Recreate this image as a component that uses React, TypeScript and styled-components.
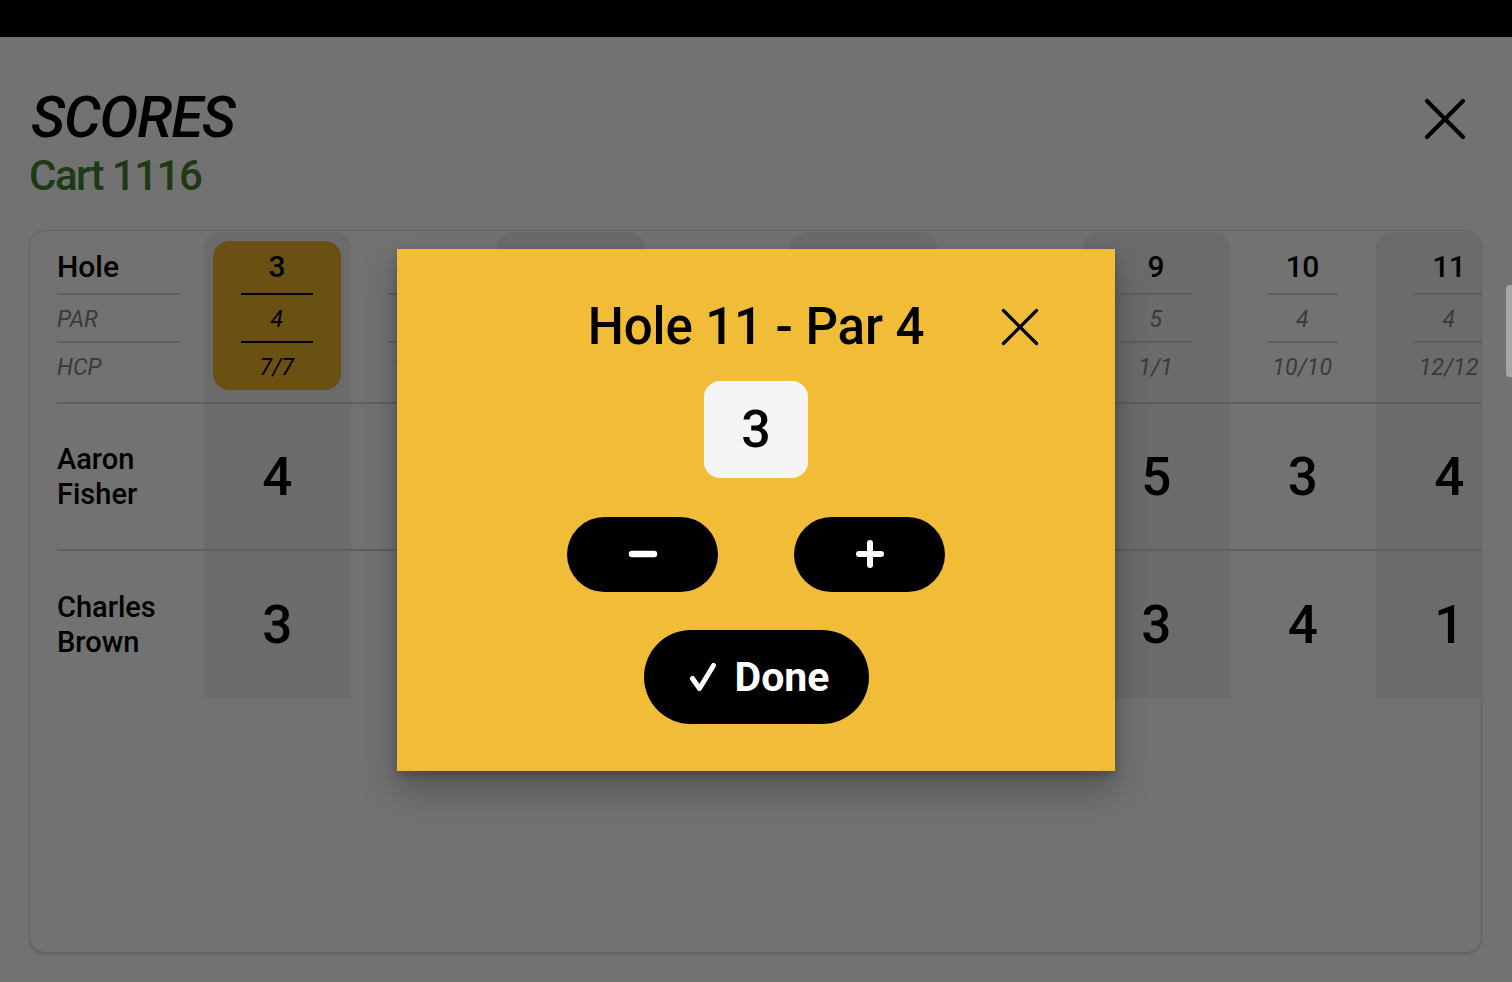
import styled, { createGlobalStyle } from "styled-components";
import { useState } from "react";

const GlobalStyle = createGlobalStyle`
  html, body {
    margin: 0;
    padding: 0;
  }
  body {
    font-family: Roboto, "Liberation Sans", sans-serif;
    background: #fff;
    color: #000;
    overflow: hidden;
  }
  * {
    box-sizing: border-box;
  }
`;

type HoleType = {
  hole: number;
  par: number;
  hcp: string;
};

type PlayerType = {
  first: string;
  last: string;
  scores: number[];
};

const holes: HoleType[] = [
  { hole: 3, par: 4, hcp: "7/7" },
  { hole: 4, par: 3, hcp: "15/15" },
  { hole: 5, par: 4, hcp: "3/3" },
  { hole: 6, par: 5, hcp: "11/11" },
  { hole: 7, par: 4, hcp: "5/5" },
  { hole: 8, par: 3, hcp: "17/17" },
  { hole: 9, par: 5, hcp: "1/1" },
  { hole: 10, par: 4, hcp: "10/10" },
  { hole: 11, par: 4, hcp: "12/12" },
];

const players: PlayerType[] = [
  { first: "Aaron", last: "Fisher", scores: [4, 3, 5, 6, 4, 3, 5, 3, 4] },
  { first: "Charles", last: "Brown", scores: [3, 4, 4, 5, 5, 2, 3, 4, 1] },
];

const CloseIcon = ({ size, stroke }: { size: number; stroke: number }) => (
  <svg width={size} height={size} viewBox="0 0 48 48" fill="none">
    <path
      d="M6 6 L42 42 M42 6 L6 42"
      stroke="#000"
      strokeWidth={stroke}
      strokeLinecap="round"
    />
  </svg>
);

const App: React.FC = () => {
  const [score, setScore] = useState<number>(3);
  const activeHole = holes[0].hole;

  return (
    <>
      <GlobalStyle />
      <Screen>
        <StatusBar />
        <Page>
          <Header>
            <div>
              <Title>SCORES</Title>
              <Subtitle>Cart 1116</Subtitle>
            </div>
            <HeaderClose aria-label="Close">
              <CloseIcon size={48} stroke={4.2} />
            </HeaderClose>
          </Header>

          <Card>
            <LabelColumn>
              <HeadCell>
                <HeadBox>
                  <HoleLabel>Hole</HoleLabel>
                  <SubLabel>PAR</SubLabel>
                  <SubLabel $last>HCP</SubLabel>
                </HeadBox>
              </HeadCell>
              {players.map((p, i) => (
                <ScoreCell key={p.first} $last={i === players.length - 1}>
                  <PlayerName>
                    {p.first}
                    <br />
                    {p.last}
                  </PlayerName>
                </ScoreCell>
              ))}
            </LabelColumn>

            {holes.map((h, idx) => {
              const active = h.hole === activeHole;
              return (
                <HoleColumn key={h.hole} $shaded={idx % 2 === 0}>
                  <HeadCell>
                    <HoleBox $active={active}>
                      <HoleNumber $active={active}>{h.hole}</HoleNumber>
                      <HoleInfo $active={active}>{h.par}</HoleInfo>
                      <HoleInfo $active={active} $last>
                        {h.hcp}
                      </HoleInfo>
                    </HoleBox>
                  </HeadCell>
                  {players.map((p, i) => (
                    <ScoreCell key={p.first} $last={i === players.length - 1}>
                      <ScoreValue>{p.scores[idx]}</ScoreValue>
                    </ScoreCell>
                  ))}
                </HoleColumn>
              );
            })}
          </Card>
        </Page>

        <Overlay>
          <Modal>
            <ModalTitle>Hole 11 - Par 4</ModalTitle>
            <ModalClose aria-label="Close">
              <CloseIcon size={44} stroke={3.6} />
            </ModalClose>

            <ScoreBox>{score}</ScoreBox>

            <StepperRow>
              <StepButton onClick={() => setScore((s) => Math.max(0, s - 1))}>
                <svg width="30" height="30" viewBox="0 0 30 30">
                  <path
                    d="M4 15 H26"
                    stroke="#fff"
                    strokeWidth="6.5"
                    strokeLinecap="round"
                  />
                </svg>
              </StepButton>
              <StepButton onClick={() => setScore((s) => s + 1)}>
                <svg width="30" height="30" viewBox="0 0 30 30">
                  <path
                    d="M4 15 H26 M15 4 V26"
                    stroke="#fff"
                    strokeWidth="6"
                    strokeLinecap="round"
                  />
                </svg>
              </StepButton>
            </StepperRow>

            <DoneButton>
              <svg width="28" height="30" viewBox="0 0 28 30">
                <path
                  d="M3.5 16.5 L10.5 26.5 L24.5 3.5"
                  stroke="#fff"
                  strokeWidth="5"
                  strokeLinecap="round"
                  strokeLinejoin="round"
                  fill="none"
                />
              </svg>
              Done
            </DoneButton>
          </Modal>
        </Overlay>
        <ScrollThumb />
      </Screen>
    </>
  );
};

const Screen = styled.div`
  width: 1512px;
  height: 982px;
  overflow: hidden;
  position: relative;
  background: #fff;
`;

const StatusBar = styled.div`
  height: 37px;
  background: #000;
`;

const Page = styled.div`
  padding: 51px 30px 0 29px;
`;

const Header = styled.div`
  display: flex;
  justify-content: space-between;
  align-items: flex-start;
`;

const Title = styled.h1`
  margin: 0 0 0 2px;
  font-size: 58px;
  line-height: 58px;
  font-style: italic;
  font-weight: 500;
  letter-spacing: -1.2px;
`;

const Subtitle = styled.div`
  margin-top: 9px;
  font-size: 42px;
  line-height: 42px;
  font-weight: 500;
  letter-spacing: -1.5px;
  color: #438431;
`;

const HeaderClose = styled.button`
  margin: 7px 13px 0 0;
  width: 48px;
  height: 48px;
  padding: 0;
  border: none;
  background: none;
  display: flex;
`;

const Card = styled.div`
  margin-top: 33px;
  height: 723px;
  display: flex;
  padding: 1px 0 0 27px;
  border: 1px solid #e2e2e2;
  border-radius: 16px;
  overflow: hidden;
  background: #fff;
  box-shadow: 0 2px 2px rgba(0, 0, 0, 0.14);
`;

const LabelColumn = styled.div`
  flex: 0 0 147px;
  display: flex;
  flex-direction: column;
`;

const HoleColumn = styled.div<{ $shaded: boolean }>`
  flex: 0 0 146.5px;
  display: flex;
  flex-direction: column;
  align-self: flex-start;
  border-radius: 16px 16px 0 0;
  background: ${({ $shaded }) => ($shaded ? "#efefef" : "transparent")};
`;

const HeadCell = styled.div`
  height: 172px;
  padding-top: 9px;
  border-bottom: 2px solid #d4d4d4;
`;

const HeadBox = styled.div`
  width: 122px;
  display: flex;
  flex-direction: column;
`;

const HoleLabel = styled.div`
  height: 54px;
  padding-top: 9px;
  font-size: 30px;
  line-height: 34px;
  font-weight: 500;
  border-bottom: 2px solid #d4d4d4;
`;

const SubLabel = styled.div<{ $last?: boolean }>`
  height: ${({ $last }) => ($last ? 47 : 48)}px;
  display: flex;
  align-items: center;
  padding-top: 2px;
  font-size: 23px;
  font-style: italic;
  color: #848484;
  border-bottom: ${({ $last }) => ($last ? "none" : "2px solid #d4d4d4")};
`;

const HoleBox = styled.div<{ $active: boolean }>`
  margin: 0 10px 0 9px;
  height: 149px;
  padding: 0 28px;
  border-radius: 16px;
  display: flex;
  flex-direction: column;
  background: ${({ $active }) => ($active ? "#efb32d" : "transparent")};
`;

const HoleNumber = styled.div<{ $active: boolean }>`
  height: 54px;
  padding-top: 9px;
  text-align: center;
  font-size: 30px;
  line-height: 34px;
  font-weight: 500;
  letter-spacing: -0.5px;
  border-bottom: 2px solid ${({ $active }) => ($active ? "#000" : "#d2d2d2")};
`;

const HoleInfo = styled.div<{ $active: boolean; $last?: boolean }>`
  height: ${({ $last }) => ($last ? 47 : 48)}px;
  display: flex;
  align-items: center;
  justify-content: center;
  padding-top: 2px;
  font-size: 23px;
  font-style: italic;
  white-space: nowrap;
  color: ${({ $active }) => ($active ? "#000" : "#848484")};
  border-bottom: ${({ $active, $last }) =>
    $last ? "none" : `2px solid ${$active ? "#000" : "#d2d2d2"}`};
`;

const ScoreCell = styled.div<{ $last: boolean }>`
  height: 147px;
  display: flex;
  align-items: center;
  justify-content: center;
  border-bottom: ${({ $last }) => ($last ? "none" : "2px solid #d4d4d4")};

  ${LabelColumn} & {
    justify-content: flex-start;
  }
`;

const PlayerName = styled.div`
  font-size: 29px;
  line-height: 35px;
  font-weight: 500;
`;

const ScoreValue = styled.div`
  font-size: 53px;
  line-height: 60px;
  font-weight: 500;
`;

const Overlay = styled.div`
  position: absolute;
  top: 37px;
  left: 0;
  right: 0;
  bottom: 0;
  background: rgba(0, 0, 0, 0.553);
  display: flex;
  align-items: center;
  justify-content: center;
`;

const Modal = styled.div`
  position: relative;
  width: 718px;
  height: 522px;
  padding-top: 50px;
  background: #f1bd39;
  display: flex;
  flex-direction: column;
  align-items: center;
  box-shadow: 0 18px 34px rgba(0, 0, 0, 0.28), 0 4px 8px rgba(0, 0, 0, 0.18);
`;

const ModalTitle = styled.h2`
  margin: 0;
  font-size: 51px;
  line-height: 56px;
  font-weight: 500;
  letter-spacing: -0.1px;
`;

const ModalClose = styled.button`
  position: absolute;
  top: 56px;
  right: 73px;
  width: 44px;
  height: 44px;
  padding: 0;
  border: none;
  background: none;
  display: flex;
`;

const ScoreBox = styled.div`
  margin-top: 26px;
  width: 104px;
  height: 97px;
  border-radius: 16px;
  background: #f5f5f5;
  display: flex;
  align-items: center;
  justify-content: center;
  font-size: 52px;
  font-weight: 500;
`;

const StepperRow = styled.div`
  margin-top: 39px;
  display: flex;
  gap: 76px;
`;

const StepButton = styled.button`
  width: 151px;
  height: 75px;
  border: none;
  border-radius: 38px;
  background: #000;
  display: flex;
  align-items: center;
  justify-content: center;
  cursor: pointer;
`;

const DoneButton = styled.button`
  margin-top: 38px;
  width: 225px;
  height: 94px;
  border: none;
  border-radius: 47px;
  background: #000;
  color: #fff;
  display: flex;
  align-items: center;
  justify-content: center;
  gap: 18px;
  padding: 0 0 0 6px;
  font-family: Roboto, "Liberation Sans", sans-serif;
  font-size: 41px;
  font-weight: 700;
  cursor: pointer;
`;

const ScrollThumb = styled.div`
  position: absolute;
  right: 0;
  top: 285px;
  width: 6px;
  height: 92px;
  border-radius: 4px 0 0 4px;
  background: #a6a6a6;
`;

export default App;
